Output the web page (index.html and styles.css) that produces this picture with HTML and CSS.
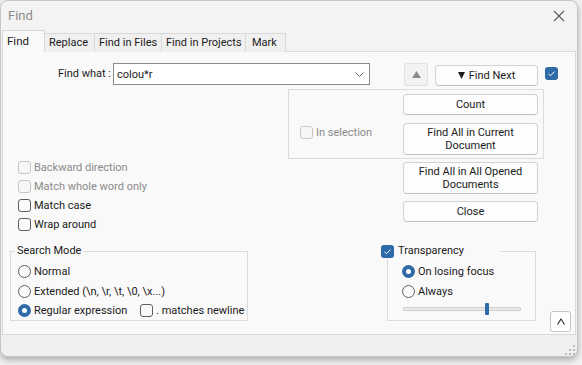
FILE: index.html
```html
<!DOCTYPE html>
<html lang="en">
<head>
<meta charset="utf-8">
<title>Find</title>
<link rel="stylesheet" href="styles.css">
</head>
<body>
<div class="window">
  <div class="titlebar">
    <span class="title">Find</span>
    <svg class="close-x" width="12" height="12" viewBox="0 0 12 12"><path d="M1 1 L11 11 M11 1 L1 11" stroke="#5a5a5a" stroke-width="1.1" fill="none"/></svg>
  </div>
  <div class="tabs">
    <div class="tab active t-find">Find</div>
    <div class="tab t-replace">Replace</div>
    <div class="tab t-files">Find in Files</div>
    <div class="tab t-projects">Find in Projects</div>
    <div class="tab t-mark">Mark</div>
  </div>
  <div class="panel">
    <div class="row-find">
      <label class="find-label">Find what :</label>
      <div class="combo">
        <span class="combo-text">colou*r</span>
        <svg width="9" height="5" viewBox="0 0 9 5"><path d="M0.5 0.5 L4.5 4.5 L8.5 0.5" stroke="#5f5f5f" stroke-width="1" fill="none"/></svg>
      </div>
      <button class="btn btn-up"><svg width="9" height="7" viewBox="0 0 9 7"><polygon points="0,7 4.5,0 9,7" fill="#8c8c8c"/></svg></button>
      <button class="btn btn-next"><svg width="7" height="7" viewBox="0 0 7 7"><polygon points="0,0 7,0 3.5,7" fill="#1b1b1b"/></svg><span>Find Next</span></button>
      <span class="cb cb-blue cb-top"><svg width="13" height="13" viewBox="0 0 13 13"><path d="M3.5 6.8 L5.5 8.7 L9.5 4.6" stroke="#fff" stroke-width="1" fill="none"/></svg></span>
    </div>

    <div class="sel-group">
      <div class="check-row disabled sel-check"><span class="cb"></span><span>In selection</span></div>
      <div class="btn-col">
        <button class="btn btn-count">Count</button>
        <button class="btn btn-tall">Find All in Current<br>Document</button>
      </div>
    </div>

    <div class="mid">
      <div class="opts">
        <div class="check-row disabled"><span class="cb"></span><span>Backward direction</span></div>
        <div class="check-row disabled"><span class="cb"></span><span>Match whole word only</span></div>
        <div class="check-row"><span class="cb"></span><span>Match case</span></div>
        <div class="check-row"><span class="cb"></span><span>Wrap around</span></div>
      </div>
      <div class="btn-col">
        <button class="btn btn-tall btn-opened">Find All in All Opened<br>Documents</button>
        <button class="btn btn-close">Close</button>
      </div>
    </div>

    <div class="bottom">
      <fieldset class="mode-group">
        <legend>Search Mode</legend>
        <div class="radio-row r20"><span class="rb"></span><span>Normal</span></div>
        <div class="radio-row r20"><span class="rb"></span><span>Extended (\n, \r, \t, \0, \x...)</span></div>
        <div class="mode-last">
          <div class="radio-row regex"><span class="rb rb-on"></span><span>Regular expression</span></div>
          <div class="check-row"><span class="cb"></span><span>. matches newline</span></div>
        </div>
      </fieldset>
      <fieldset class="trans-group">
        <legend><span class="cb cb-blue"><svg width="13" height="13" viewBox="0 0 13 13"><path d="M3.5 6.8 L5.5 8.7 L9.5 4.6" stroke="#fff" stroke-width="1" fill="none"/></svg></span><span>Transparency</span></legend>
        <div class="radio-row r20 trans-row"><span class="rb rb-on"></span><span>On losing focus</span></div>
        <div class="radio-row r20 trans-row"><span class="rb"></span><span>Always</span></div>
        <div class="slider-row"><div class="track"><div class="thumb"></div></div></div>
      </fieldset>
      <button class="btn btn-collapse"><svg width="10" height="7" viewBox="0 0 10 7"><path d="M1.5 6.5 L5 1 L8.5 6.5" stroke="#2a2a2a" stroke-width="1.1" fill="none"/></svg></button>
    </div>
  </div>
  <div class="footer">
    <svg class="grip" width="12" height="12" viewBox="0 0 12 12" fill="#b9b9b9">
      <rect x="9" y="1" width="2" height="2"/>
      <rect x="5" y="5" width="2" height="2"/><rect x="9" y="5" width="2" height="2"/>
      <rect x="1" y="9" width="2" height="2"/><rect x="5" y="9" width="2" height="2"/><rect x="9" y="9" width="2" height="2"/>
    </svg>
  </div>
</div>
</body>
</html>
```

FILE: styles.css
```css
html, body {
  margin: 0;
  padding: 0;
}
body {
  background: #f3f3f3;
  font-family: Roboto, "Noto Sans", sans-serif;
  font-size: 11px;
  color: #1b1b1b;
  height: 365px;
  overflow: hidden;
}
.window {
  width: 578px;
  height: 357px;
  box-sizing: border-box;
  border: 1px solid #c6c6c6;
  border-radius: 8px;
  background: #f0f0f0;
  box-shadow: 0 3px 7px rgba(0, 0, 0, 0.3);
  display: flex;
  flex-direction: column;
  overflow: hidden;
}
.titlebar {
  height: 29px;
  flex: none;
  display: flex;
  align-items: center;
  justify-content: space-between;
  padding: 0 12px 0 7px;
  background: #f3f3f3;
}
.title {
  font-size: 13px;
  color: #8b8b8b;
}
.tabs {
  height: 21px;
  flex: none;
  display: flex;
  align-items: flex-start;
  padding-left: 1px;
  background: #f3f3f3;
  position: relative;
  z-index: 1;
}
.tab {
  box-sizing: border-box;
  height: 19px;
  margin-top: 3px;
  margin-left: -1px;
  border: 1px solid #d9d9d9;
  border-bottom: none;
  background: #f0f0f0;
  padding: 1px 0 0 4px;
  line-height: 16px;
  white-space: nowrap;
  overflow: hidden;
}
.tab.active {
  height: 22px;
  margin-top: 0;
  margin-left: 0;
  padding-top: 2px;
  padding-left: 4px;
  background: #f9f9f9;
  position: relative;
  z-index: 2;
}
.t-find { width: 43px; font-size: 11.5px; }
.t-replace { width: 51px; }
.t-files { width: 68px; }
.t-projects { width: 85px; }
.t-mark { width: 41px; padding-left: 6px; }

.panel {
  box-sizing: border-box;
  height: 284px;
  flex: none;
  margin: 0 1px;
  border: 1px solid #d9d9d9;
  background: #f9f9f9;
}

/* generic controls */
.btn {
  font: inherit;
  color: #1b1b1b;
  box-sizing: border-box;
  background: #fdfdfd;
  border: 1px solid #d2d2d2;
  border-bottom-color: #bfbfbf;
  border-radius: 4px;
  padding: 0;
  margin: 0;
  line-height: 13px;
  text-align: center;
  display: flex;
  align-items: center;
  justify-content: center;
}
.cb {
  box-sizing: border-box;
  width: 13px;
  height: 13px;
  flex: none;
  border: 1px solid #5f5f5f;
  border-radius: 3px;
  background: #fafafa;
  display: inline-flex;
}
.cb-blue {
  border: none;
  background: #2f6aa8;
}
.rb {
  box-sizing: border-box;
  width: 13px;
  height: 13px;
  flex: none;
  border: 1px solid #5f5f5f;
  border-radius: 50%;
  background: #fafafa;
}
.rb-on {
  border: 4px solid #2f6aa8;
  background: #ffffff;
}
.check-row, .radio-row {
  display: flex;
  align-items: center;
  gap: 3px;
  height: 19px;
  white-space: nowrap;
}
.r20 { height: 20px; }
.disabled { color: #8a8a8a; }
.disabled .cb { border-color: #c6c6c6; background: #f7f7f7; }

/* row 1 */
.row-find {
  display: flex;
  align-items: flex-start;
  margin-top: 11px;
  padding-left: 8px;
}
.find-label {
  width: 100px;
  text-align: right;
  line-height: 22px;
}
.combo {
  box-sizing: border-box;
  width: 257px;
  height: 22px;
  margin-left: 2px;
  border: 1px solid #8a8a8a;
  background: #ffffff;
  display: flex;
  align-items: center;
  justify-content: space-between;
  padding: 0 5px 0 3px;
}
.btn-up {
  width: 24px;
  height: 23px;
  margin-left: 34px;
  background: #f2f2f2;
  border: 1px solid #e0e0e0;
  border-radius: 3px;
}
.btn-next {
  width: 103px;
  height: 21px;
  margin-left: 7px;
  margin-top: 2px;
  gap: 4px;
}
.cb-top {
  margin-left: 7px;
  margin-top: 4px;
}

/* in selection group */
.sel-group {
  box-sizing: border-box;
  width: 256px;
  height: 70px;
  margin: 3px 0 0 285px;
  border: 1px solid #dcdcdc;
  display: flex;
  align-items: flex-start;
  padding: 0 5px 0 11px;
}
.sel-check {
  margin-top: 33px;
}
.btn-col {
  margin-left: auto;
  width: 135px;
  display: flex;
  flex-direction: column;
}
.btn-count {
  height: 21px;
  margin-top: 4px;
}
.btn-tall {
  height: 32px;
  margin-top: 8px;
}

/* middle */
.mid {
  display: flex;
  align-items: flex-start;
}
.opts {
  width: 385px;
  margin-top: -1px;
  padding-left: 15px;
}
.mid .btn-col {
  margin-left: 0;
}
.btn-opened {
  margin-top: 3px;
}
.btn-close {
  height: 21px;
  margin-top: 7px;
}

/* bottom */
.bottom {
  display: flex;
  align-items: flex-start;
  margin-top: 9px;
  padding-left: 7px;
}
fieldset {
  margin: 0;
  min-width: 0;
  box-sizing: border-box;
  border: 1px solid #dcdcdc;
}
legend {
  line-height: 16px;
  white-space: nowrap;
}
.mode-group {
  width: 238px;
  padding: 2px 0 0 7px;
}
.mode-group legend {
  padding: 0 2px;
  margin-left: -3px;
}
.mode-last {
  display: flex;
  align-items: center;
  height: 19px;
}
.regex {
  width: 122px;
}
.trans-group {
  width: 149px;
  margin-left: 139px;
  padding: 2px 0 3px 0;
}
.trans-group legend {
  box-sizing: border-box;
  width: 120px;
  margin-left: -7px;
  padding: 0;
  display: flex;
  align-items: center;
  gap: 4px;
  height: 16px;
}
.trans-row {
  margin-left: 14px;
}
.slider-row {
  height: 16px;
  display: flex;
  align-items: center;
  padding-left: 15px;
}
.track {
  box-sizing: border-box;
  width: 118px;
  height: 4px;
  border: 1px solid #d0d0d0;
  background: #e8e8e8;
  border-radius: 1px;
  display: flex;
  align-items: center;
}
.thumb {
  width: 4px;
  height: 12px;
  flex: none;
  margin-left: 81px;
  background: #2f6aa8;
  border-radius: 1px;
}
.btn-collapse {
  width: 21px;
  height: 21px;
  margin-left: 14px;
  margin-top: 68px;
  background: #ffffff;
  border: 1px solid #c4c4c4;
  border-radius: 3px;
}

/* footer */
.footer {
  flex: 1;
  display: flex;
  justify-content: flex-end;
  align-items: flex-end;
  padding: 0 1px 0 0;
}
```
